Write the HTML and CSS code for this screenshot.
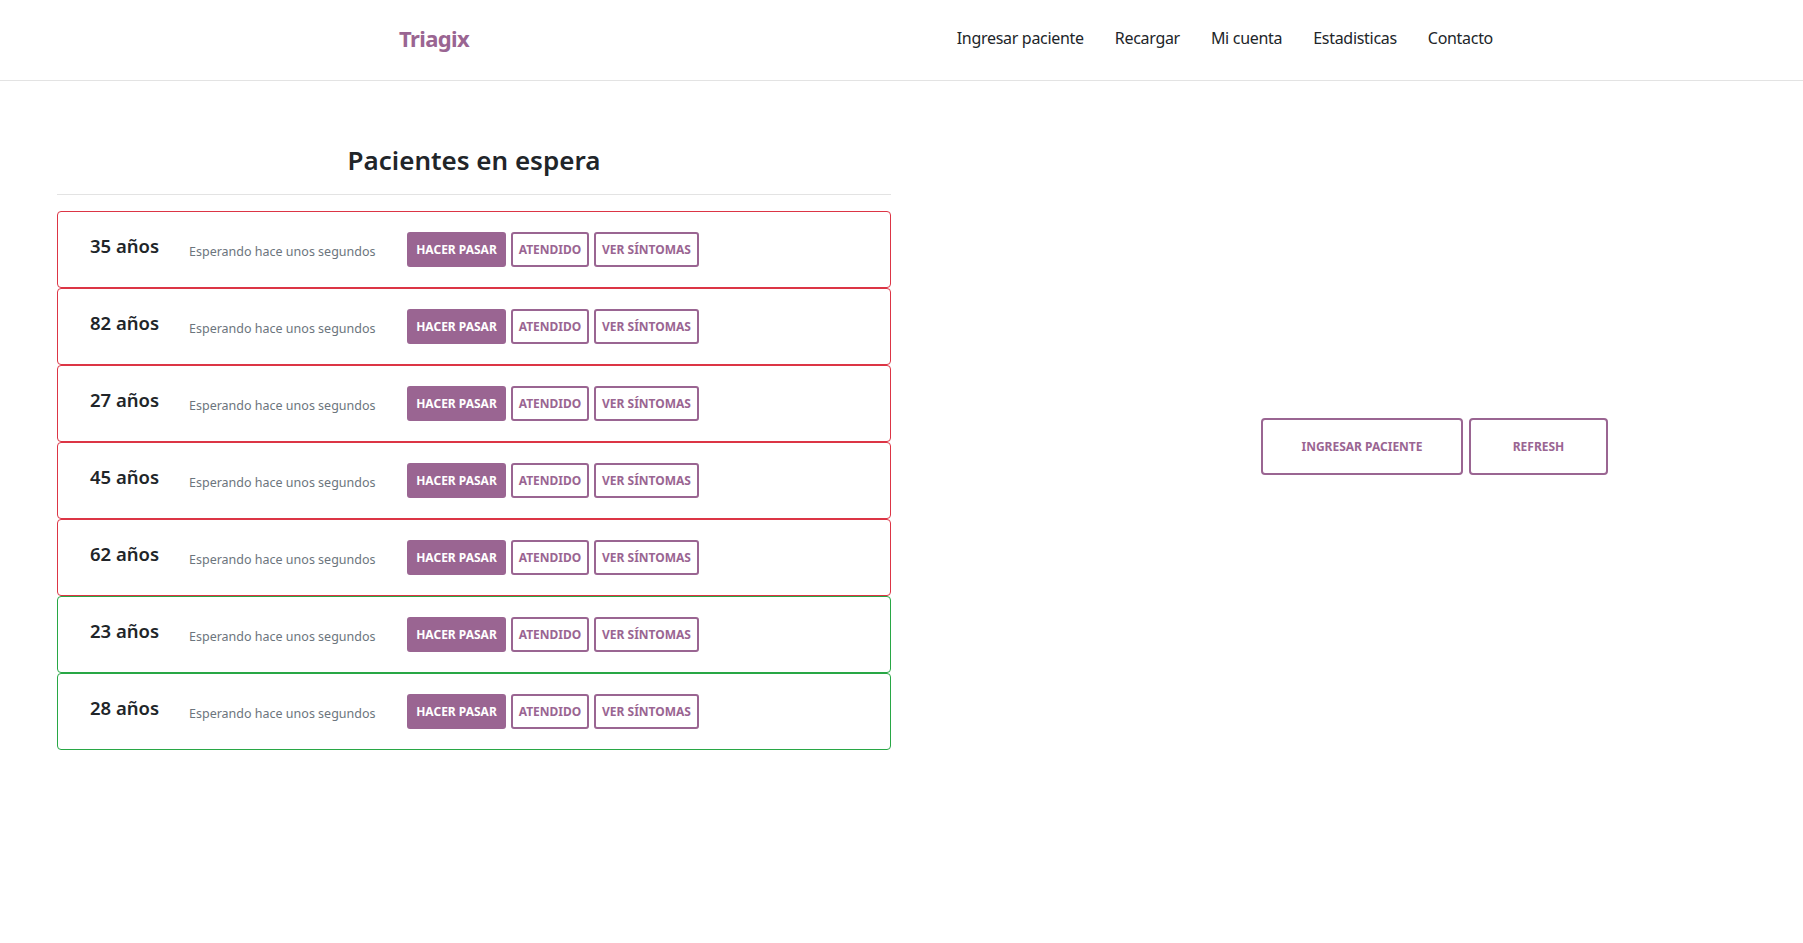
FILE: index.html
```html
<!DOCTYPE html>
<html lang="es">
<head>
<meta charset="utf-8">
<title>Triagix</title>
<link rel="stylesheet" href="styles.css">
</head>
<body>
<header class="topbar">
  <div class="topbar-inner">
    <a class="brand" href="#">Triagix</a>
    <nav class="nav">
      <a href="#">Ingresar paciente</a>
      <a href="#">Recargar</a>
      <a href="#">Mi cuenta</a>
      <a href="#">Estadisticas</a>
      <a href="#">Contacto</a>
    </nav>
  </div>
</header>
<main class="main">
  <section class="queue">
    <h2 class="queue-title">Pacientes en espera</h2>
    <hr class="divider">
    <div class="card urgent">
      <span class="age">35 años</span>
      <span class="wait">Esperando hace unos segundos</span>
      <div class="actions">
        <button class="btn btn-fill w-pasar">HACER PASAR</button>
        <button class="btn w-atendido">ATENDIDO</button>
        <button class="btn w-sintomas">VER SÍNTOMAS</button>
      </div>
    </div>
    <div class="card urgent">
      <span class="age">82 años</span>
      <span class="wait">Esperando hace unos segundos</span>
      <div class="actions">
        <button class="btn btn-fill w-pasar">HACER PASAR</button>
        <button class="btn w-atendido">ATENDIDO</button>
        <button class="btn w-sintomas">VER SÍNTOMAS</button>
      </div>
    </div>
    <div class="card urgent">
      <span class="age">27 años</span>
      <span class="wait">Esperando hace unos segundos</span>
      <div class="actions">
        <button class="btn btn-fill w-pasar">HACER PASAR</button>
        <button class="btn w-atendido">ATENDIDO</button>
        <button class="btn w-sintomas">VER SÍNTOMAS</button>
      </div>
    </div>
    <div class="card urgent">
      <span class="age">45 años</span>
      <span class="wait">Esperando hace unos segundos</span>
      <div class="actions">
        <button class="btn btn-fill w-pasar">HACER PASAR</button>
        <button class="btn w-atendido">ATENDIDO</button>
        <button class="btn w-sintomas">VER SÍNTOMAS</button>
      </div>
    </div>
    <div class="card urgent">
      <span class="age">62 años</span>
      <span class="wait">Esperando hace unos segundos</span>
      <div class="actions">
        <button class="btn btn-fill w-pasar">HACER PASAR</button>
        <button class="btn w-atendido">ATENDIDO</button>
        <button class="btn w-sintomas">VER SÍNTOMAS</button>
      </div>
    </div>
    <div class="card calm">
      <span class="age">23 años</span>
      <span class="wait">Esperando hace unos segundos</span>
      <div class="actions">
        <button class="btn btn-fill w-pasar">HACER PASAR</button>
        <button class="btn w-atendido">ATENDIDO</button>
        <button class="btn w-sintomas">VER SÍNTOMAS</button>
      </div>
    </div>
    <div class="card calm">
      <span class="age">28 años</span>
      <span class="wait">Esperando hace unos segundos</span>
      <div class="actions">
        <button class="btn btn-fill w-pasar">HACER PASAR</button>
        <button class="btn w-atendido">ATENDIDO</button>
        <button class="btn w-sintomas">VER SÍNTOMAS</button>
      </div>
    </div>
  </section>
  <aside class="side">
    <button class="btn btn-big w-ingresar">INGRESAR PACIENTE</button>
    <button class="btn btn-big w-refresh">REFRESH</button>
  </aside>
</main>
</body>
</html>
```
FILE: styles.css
```css
* { box-sizing: border-box; }
body {
  margin: 0;
  font-family: "Noto Sans", "Open Sans", sans-serif;
  color: #212529;
  background: #fff;
}
.topbar {
  height: 81px;
  border-bottom: 1px solid #e3e3e3;
}
.topbar-inner {
  height: 80px;
  padding-bottom: 4px;
  margin-left: 399px;
  width: 1094px;
  display: flex;
  align-items: center;
  justify-content: space-between;
}
.brand {
  font-size: 22px;
  font-weight: 700;
  color: #9a6592;
  text-decoration: none;
  letter-spacing: -0.6px;
}
.nav {
  display: flex;
  gap: 31px;
}
.nav a {
  font-size: 16px;
  color: #212529;
  text-decoration: none;
  letter-spacing: -0.3px;
}
.main {
  display: flex;
  align-items: center;
  padding-left: 57px;
  padding-top: 62px;
}
.queue {
  width: 834px;
}
.queue-title {
  margin: 0;
  text-align: center;
  font-size: 26px;
  font-weight: 600;
  line-height: 34px;
}
.divider {
  border: 0;
  border-top: 1px solid #e3e3e3;
  margin: 17px 0 16px;
}
.card {
  height: 77px;
  border: 1px solid #dc3545;
  border-radius: 4px;
  display: flex;
  align-items: center;
  padding-left: 32px;
}
.card.calm { border-color: #28a745; }
.age {
  width: 99px;
  font-size: 18.5px;
  font-weight: 600;
  margin-bottom: 8px;
}
.wait {
  width: 218px;
  font-size: 12.5px;
  color: #6c757d;
  margin-top: 4px;
}
.actions {
  display: flex;
  gap: 5px;
}
.btn {
  height: 35px;
  padding: 0;
  font-family: inherit;
  font-size: 12px;
  font-weight: 700;
  color: #9a6592;
  background: #fff;
  border: 2px solid #9a6592;
  border-radius: 3px;
  cursor: pointer;
}
.btn-fill { background: #9a6592; color: #fff; }
.w-pasar { width: 99px; }
.w-atendido { width: 78px; }
.w-sintomas { width: 105px; }
.side {
  margin-left: 370px;
  display: flex;
  gap: 6px;
}
.btn-big {
  height: 57px;
  border-radius: 4px;
}
.w-ingresar { width: 202px; }
.w-refresh { width: 139px; }
```
